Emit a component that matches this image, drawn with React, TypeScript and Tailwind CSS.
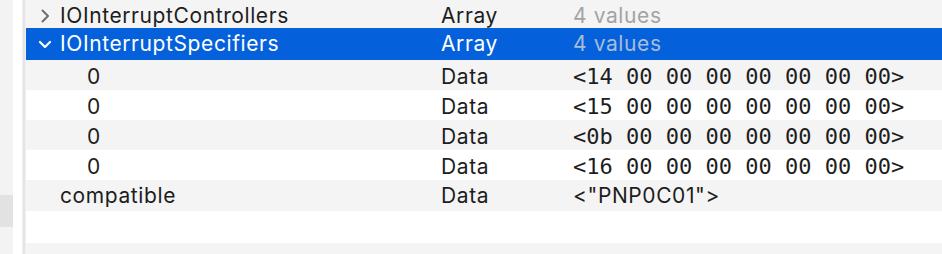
type Row = {
  name?: string;
  indent?: number;
  chevron?: 'right' | 'down';
  type?: string;
  value?: string;
  mono?: boolean;
  muted?: boolean;
  selected?: boolean;
  h: string;
};

const rows: Row[] = [
  { name: 'IOInterruptControllers', chevron: 'right', type: 'Array', value: '4 values', muted: true, h: 'h-[28px] pb-[4px]' },
  { name: 'IOInterruptSpecifiers', chevron: 'down', type: 'Array', value: '4 values', muted: true, selected: true, h: 'h-[32px]' },
  { name: '0', indent: 1, type: 'Data', value: '<14 00 00 00 00 00 00 00>', mono: true, h: 'h-[30px]' },
  { name: '0', indent: 1, type: 'Data', value: '<15 00 00 00 00 00 00 00>', mono: true, h: 'h-[30px]' },
  { name: '0', indent: 1, type: 'Data', value: '<0b 00 00 00 00 00 00 00>', mono: true, h: 'h-[30px]' },
  { name: '0', indent: 1, type: 'Data', value: '<16 00 00 00 00 00 00 00>', mono: true, h: 'h-[30px]' },
  { name: 'compatible', type: 'Data', value: '<"PNP0C01">', h: 'h-[31px]' },
  { h: 'h-[32px]' },
  { h: 'h-[20px]' },
];

function Chevron({ dir, light }: { dir: 'right' | 'down'; light?: boolean }) {
  const stroke = light ? '#ffffff' : '#6e6e6e';
  return (
    <svg width="14" height="14" viewBox="0 0 14 14" className="shrink-0">
      {dir === 'right' ? (
        <path d="M4.5 1.5 L10 7 L4.5 12.5" fill="none" stroke={stroke} strokeWidth="2" strokeLinecap="round" strokeLinejoin="round" />
      ) : (
        <path d="M2 5 L7 10 L12 5" fill="none" stroke={stroke} strokeWidth="2.2" strokeLinecap="round" strokeLinejoin="round" />
      )}
    </svg>
  );
}

export default function App() {
  return (
    <div className="flex w-[942px] h-[254px] overflow-hidden bg-white text-[#1d1d1d] font-['Inter','Liberation_Sans',sans-serif]">
      <div className="flex w-[22px] shrink-0">
        <div className="w-[13px] flex flex-col bg-[#f3f3f3]">
          <div className="h-[195px] shrink-0" />
          <div className="h-[32px] shrink-0 bg-[#e2e2e2]" />
        </div>
        <div className="flex-1 bg-white" />
      </div>
      <div className="w-[4px] shrink-0 bg-[#e4e4e4] border-x border-[#f0f0f0]" />
      <div className="flex-1 flex flex-col">
        {rows.map((r, i) => {
          const bg = r.selected ? 'bg-[#0461db]' : i % 2 === 0 ? 'bg-[#f4f4f4]' : 'bg-white';
          const pad = r.chevron ? 'pl-[12px]' : r.indent ? 'pl-[61px]' : 'pl-[34px]';
          return (
            <div
              key={i}
              className={`grid shrink-0 grid-cols-[415px_132px_1fr] items-center text-[21px] tracking-[0.6px] ${r.h} ${bg} ${r.selected ? 'text-white' : ''}`}
            >
              <div className={`flex items-center gap-[8px] ${pad}`}>
                {r.chevron && <Chevron dir={r.chevron} light={r.selected} />}
                <span>{r.name}</span>
              </div>
              <div>{r.type}</div>
              <div
                className={
                  r.mono
                    ? "font-['DejaVu_Sans_Mono',monospace] text-[22px] tracking-[0px]"
                    : r.muted
                    ? r.selected
                      ? 'text-[#a9bcd8]'
                      : 'text-[#a3a3a3]'
                    : ''
                }
              >
                {r.value}
              </div>
            </div>
          );
        })}
      </div>
    </div>
  );
}
